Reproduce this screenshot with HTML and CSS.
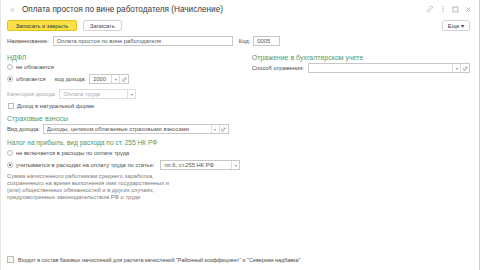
FILE: index.html
```html
<!DOCTYPE html>
<html lang="ru">
<head>
    <meta charset="UTF-8">
    <title>Оплата простоя по вине работодателя (Начисление)</title>
    <link rel="stylesheet" href="styles.css">
</head>
<body>

<div class="window">

    <div class="title-bar">
        <svg class="star" width="7" height="7" viewBox="0 0 10 10"><path d="M5 0.6 L6.3 3.6 L9.5 3.8 L7 5.9 L7.9 9.2 L5 7.4 L2.1 9.2 L3 5.9 L0.5 3.8 L3.7 3.6 Z" fill="#e4e4e4"/></svg>
        <h1>Оплата простоя по вине работодателя (Начисление)</h1>
        <div class="win-icons">
            <svg width="8" height="8" viewBox="0 0 10 10"><path d="M4.2 5.8 L5.8 4.2 M3.6 4.6 L2 6.2 a1.6 1.6 0 0 0 2.2 2.2 L5.8 6.8 M6.4 5.4 L8 3.8 a1.6 1.6 0 0 0 -2.2 -2.2 L4.2 3.2" fill="none" stroke="#aaa" stroke-width="0.9"/></svg>
            <svg width="6" height="8" viewBox="0 0 6 10"><circle cx="3" cy="2" r="0.8" fill="#999"/><circle cx="3" cy="5" r="0.8" fill="#999"/><circle cx="3" cy="8" r="0.8" fill="#999"/></svg>
            <svg width="7" height="7" viewBox="0 0 10 10"><rect x="1.5" y="1.5" width="7" height="7" fill="none" stroke="#999" stroke-width="1"/></svg>
            <svg width="7" height="7" viewBox="0 0 10 10"><path d="M2 2 L8 8 M8 2 L2 8" stroke="#999" stroke-width="1"/></svg>
        </div>
    </div>

    <div class="toolbar">
        <button class="btn btn-main">Записать и закрыть</button>
        <button class="btn">Записать</button>
        <button class="btn btn-more">Еще ▾</button>
    </div>

    <div class="name-row">
        <label>Наименование:</label>
        <div class="field name-field">Оплата простоя по вине работодателя</div>
        <label class="code-label">Код:</label>
        <div class="field code-field">0005</div>
    </div>

    <div class="columns">
        <div class="col-left">
            <div class="heading h-ndfl">НДФЛ</div>
            <div class="row r-radio1"><span class="radio"></span>не облагается</div>
            <div class="row r-radio2">
                <span class="radio on"></span>облагается
                <span class="inline-label">код дохода:</span>
                <div class="field select code-select">
                    <span class="value">2000</span>
                    <span class="drop">▾</span>
                    <span class="open"><svg width="5" height="5" viewBox="0 0 10 10"><path d="M3 7 L8 2 M4.5 2 H8 V5.5 M6.5 8.5 H1.5 V3.5" fill="none" stroke="#888" stroke-width="1.2"/></svg></span>
                </div>
            </div>
            <div class="row r-cat muted">
                Категория дохода:
                <div class="field select cat-select">
                    <span class="value">Оплата труда</span>
                    <span class="drop">▾</span>
                </div>
            </div>
            <div class="row r-check"><span class="check"></span>Доход в натуральной форме</div>

            <div class="heading h-insur">Страховые взносы</div>
            <div class="row r-vid">
                Вид дохода:
                <div class="field select vid-select">
                    <span class="value">Доходы, целиком облагаемые страховыми взносами</span>
                    <span class="drop">▾</span>
                    <span class="open"><svg width="5" height="5" viewBox="0 0 10 10"><path d="M3 7 L8 2 M4.5 2 H8 V5.5 M6.5 8.5 H1.5 V3.5" fill="none" stroke="#888" stroke-width="1.2"/></svg></span>
                </div>
            </div>

            <div class="heading h-tax">Налог на прибыль, вид расхода по ст. 255 НК РФ</div>
            <div class="row r-radio3"><span class="radio"></span>не включается в расходы по оплате труда</div>
            <div class="row r-radio4">
                <span class="radio on"></span>учитывается в расходах на оплату труда по статье:
                <div class="field select art-select">
                    <span class="value">пп.6, ст.255 НК РФ</span>
                    <span class="drop">▾</span>
                </div>
            </div>
            <p class="note">Сумма начисленного работникам среднего заработка, сохраненного на время выполнения ими государственных и (или) общественных обязанностей и в других случаях, предусмотренных законодательством РФ о труде</p>
        </div>

        <div class="col-right">
            <div class="heading h-acc">Отражение в бухгалтерском учете</div>
            <div class="row r-acc">
                Способ отражения:
                <div class="field select acc-select">
                    <span class="value"></span>
                    <span class="drop">▾</span>
                    <span class="open"><svg width="5" height="5" viewBox="0 0 10 10"><path d="M3 7 L8 2 M4.5 2 H8 V5.5 M6.5 8.5 H1.5 V3.5" fill="none" stroke="#888" stroke-width="1.2"/></svg></span>
                </div>
            </div>
        </div>
    </div>

    <div class="footer-check">
        <span class="check"></span>Входит в состав базовых начислений для расчета начислений "Районный коэффициент" и "Северная надбавка"
    </div>

</div>

</body>
</html>
```

FILE: styles.css
```css
:root { --text: #4a4a4a; --green: #4f9a6c; --border: #c8c8c8; --muted: #a8a8a8; }

* { box-sizing: border-box; }

body { margin: 0; background: #fff; color: var(--text); font-family: 'Liberation Sans', Arial, sans-serif; font-size: 5.8px; }

.window { width: 480px; height: 270px; display: flex; flex-direction: column; padding: 0 9px 0 6px; border-left: 1px solid #e6e6e6; border-right: 1px solid #d0d0d0; }

/* --- Title --- */
.title-bar { height: 18px; display: flex; align-items: center; }
.title-bar .star { margin: 0 6px 0 2px; }
.title-bar h1 { margin: 0; font-size: 8.2px; font-weight: normal; color: #3a3a3a; }
.win-icons { margin-left: auto; display: flex; align-items: center; gap: 6px; margin-right: -2px; }

/* --- Toolbar --- */
.toolbar { height: 11px; margin-top: 2px; display: flex; gap: 6px; }
.btn { height: 11px; padding: 0 6px; font: inherit; font-size: 5.8px; color: #444; background: #fff; border: 1px solid #d2d2d2; border-radius: 2px; }
.btn-main { background: #fbe046; border-color: #e0c21c; color: #333; width: 70px; }
.btn-more { margin-left: auto; width: 28px; padding: 0; }

/* --- Fields --- */
.field { height: 10px; border: 1px solid var(--border); background: #fff; display: flex; align-items: center; padding-left: 3px; color: #555; white-space: nowrap; overflow: hidden; }
.select { padding-right: 0; }
.select .value { flex: 1; overflow: hidden; }
.select .drop, .select .open { width: 8px; height: 100%; border-left: 1px solid #ddd; display: flex; align-items: center; justify-content: center; color: #888; font-size: 4px; }
.select .open { width: 9px; }

.name-row { height: 10px; margin-top: 5px; display: flex; align-items: center; }
.name-field { width: 180px; margin-left: 4px; }
.code-label { margin-left: 6px; }
.code-field { width: 27px; margin-left: 3px; }

/* --- Columns --- */
.columns { display: flex; }
.col-left { width: 246px; }
.col-right { flex: 1; }

.heading { color: var(--green); font-size: 7px; display: flex; align-items: center; white-space: nowrap; }
.row { display: flex; align-items: center; white-space: nowrap; }
.muted { color: var(--muted); }

.radio { width: 6px; height: 6px; border: 1px solid #bbb; border-radius: 50%; margin: 0 3px 0 0; display: flex; align-items: center; justify-content: center; }
.radio.on::after { content: ""; width: 2px; height: 2px; border-radius: 50%; background: #555; }
.check { width: 6px; height: 6px; border: 1px solid #bbb; margin: 0 3px 0 1px; }

.h-ndfl { margin-top: 6px; height: 10px; }
.r-radio1 { height: 9px; }
.r-radio2 { height: 12px; margin-top: 2px; }
.inline-label { margin-left: 9px; }
.code-select { width: 40px; margin-left: 3px; }
.r-cat { height: 12px; margin-top: 3px; }
.cat-select { width: 77px; margin-left: 3px; color: var(--muted); border-color: #ddd; }
.r-check { height: 12px; }
.h-insur { height: 12px; }
.r-vid { height: 10px; }
.vid-select { width: 186px; margin-left: 3px; }
.h-tax { height: 12px; margin-top: 2px; font-size: 6.6px; }
.r-radio3 { height: 9px; }
.r-radio4 { height: 12px; margin-top: 2px; }
.art-select { width: 80px; margin-left: 6px; }

.note { margin: 2px 0 0; width: 175px; color: #7a7a7a; line-height: 7px; }

.h-acc { margin-top: 6px; height: 10px; }
.r-acc { height: 10px; margin-top: 1px; }
.acc-select { width: 162px; margin-left: 4px; }

/* --- Footer --- */
.footer-check { margin-top: auto; margin-bottom: 7px; display: flex; align-items: center; font-size: 5.4px; }
.footer-check .check { width: 7px; height: 7px; background: #f7f7ee; margin: 0 4px 0 0; }
```
